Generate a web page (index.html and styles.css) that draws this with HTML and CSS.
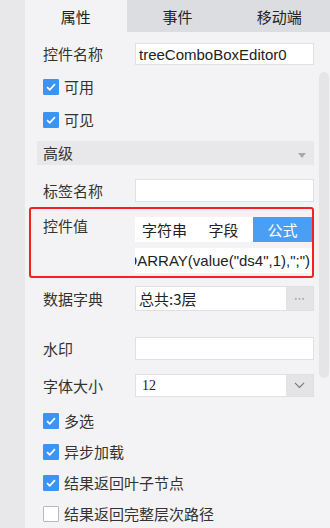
FILE: index.html
```html
<!DOCTYPE html>
<html lang="zh-CN">
<head>
    <meta charset="UTF-8">
    <meta name="viewport" content="width=device-width, initial-scale=1.0">
    <title>控件属性</title>
    <link rel="stylesheet" href="styles.css">
</head>
<body>
    <div class="sidebar"></div>

    <div class="panel">
        <!-- Pestañas -->
        <div class="tabs">
            <div class="tab active">属性</div>
            <div class="tab">事件</div>
            <div class="tab">移动端</div>
        </div>

        <div class="props">
            <div class="row row-name">
                <span class="label">控件名称</span>
                <div class="field field-name">treeComboBoxEditor0</div>
            </div>

            <div class="check check-enabled">
                <span class="box checked"><svg viewBox="0 0 16 16"><path d="M3.5 8.2 L6.6 11.2 L12.5 4.8"/></svg></span>
                可用
            </div>
            <div class="check check-visible">
                <span class="box checked"><svg viewBox="0 0 16 16"><path d="M3.5 8.2 L6.6 11.2 L12.5 4.8"/></svg></span>
                可见
            </div>

            <div class="group">
                <span>高级</span>
                <span class="caret"></span>
            </div>

            <div class="row row-tag">
                <span class="label">标签名称</span>
                <div class="field"></div>
            </div>

            <!-- Valor del control -->
            <div class="value-box">
                <span class="label value-label">控件值</span>
                <div class="value-body">
                    <div class="segments">
                        <div class="seg">字符串</div>
                        <div class="seg">字段</div>
                        <div class="seg active">公式</div>
                    </div>
                    <div class="formula"><span>=TOARRAY(value("ds4",1),";")</span></div>
                </div>
            </div>

            <div class="row row-dict">
                <span class="label">数据字典</span>
                <div class="field field-btn">
                    <span class="field-text">总共:3层</span>
                    <span class="side-btn"><svg viewBox="0 0 12 4"><circle cx="2" cy="2" r="1"/><circle cx="6" cy="2" r="1"/><circle cx="10" cy="2" r="1"/></svg></span>
                </div>
            </div>

            <div class="row row-mark">
                <span class="label">水印</span>
                <div class="field"></div>
            </div>

            <div class="row row-size">
                <span class="label">字体大小</span>
                <div class="field field-btn">
                    <span class="field-text size-text">12</span>
                    <span class="side-btn"><svg viewBox="0 0 12 7"><path d="M1 1 L6 6 L11 1"/></svg></span>
                </div>
            </div>

            <div class="check check-multi">
                <span class="box checked"><svg viewBox="0 0 16 16"><path d="M3.5 8.2 L6.6 11.2 L12.5 4.8"/></svg></span>
                多选
            </div>
            <div class="check check-next">
                <span class="box checked"><svg viewBox="0 0 16 16"><path d="M3.5 8.2 L6.6 11.2 L12.5 4.8"/></svg></span>
                异步加载
            </div>
            <div class="check check-next">
                <span class="box checked"><svg viewBox="0 0 16 16"><path d="M3.5 8.2 L6.6 11.2 L12.5 4.8"/></svg></span>
                结果返回叶子节点
            </div>
            <div class="check check-next">
                <span class="box"></span>
                结果返回完整层次路径
            </div>
        </div>

        <div class="scrollbar"></div>
    </div>
</body>
</html>
```

FILE: styles.css
```css
/* Estilos generales */
body {
    margin: 0;
    height: 528px;
    overflow: hidden;
    display: flex;
    font-family: "Noto Sans CJK SC", "Noto Sans", sans-serif;
    font-size: 15px;
    color: #333;
    background-color: #f3f3f5;
}

.sidebar {
    width: 25px;
    flex-shrink: 0;
    background-color: #e8e8ea;
}

.panel {
    flex: 1;
    min-width: 0;
    position: relative;
    background-color: #f3f3f5;
}

/* Pestañas */
.tabs {
    display: flex;
    height: 32px;
    background-color: #dcdde1;
}

.tab {
    flex: 1;
    display: flex;
    align-items: center;
    justify-content: center;
    line-height: 20px;
    padding-top: 2px;
    color: #222;
}

.tab.active {
    background-color: #f3f3f5;
}

/* Propiedades */
.props {
    padding: 0 16px 0 4px;
}

.row {
    display: flex;
    align-items: center;
    padding-left: 14px;
}

.label {
    width: 92px;
    flex-shrink: 0;
    line-height: 20px;
}

.field {
    flex: 1;
    min-width: 0;
    height: 23px;
    box-sizing: border-box;
    display: flex;
    align-items: center;
    background-color: #fff;
    border: 1px solid #e0e0e2;
    font-family: "Liberation Sans", Arial, sans-serif;
    font-size: 15px;
    color: #222;
    padding-left: 3px;
}

.row-name { margin-top: 11px; }
.field-name { height: 22px; }
.row-tag { margin-top: 14px; }
.row-dict { margin-top: 8px; }
.row-dict .field { height: 25px; }
.row-mark { margin-top: 26px; }
.row-size { margin-top: 14px; }

.field-btn {
    padding-left: 0;
    overflow: hidden;
}

.field-text {
    flex: 1;
    padding-left: 3px;
    font-family: "Noto Sans CJK SC", sans-serif;
    line-height: 20px;
}

.size-text {
    font-family: "Liberation Serif", "DejaVu Serif", serif;
    font-size: 14px;
    padding-left: 6px;
}

.side-btn {
    width: 27px;
    height: 100%;
    display: flex;
    align-items: center;
    justify-content: center;
    background-color: #e4e4e7;
}

.side-btn svg {
    width: 11px;
}

.row-dict .side-btn svg {
    fill: #9a9a9a;
}

.row-size .side-btn svg {
    width: 11px;
    fill: none;
    stroke: #777;
    stroke-width: 1.2;
}

/* Casillas */
.check {
    display: flex;
    align-items: center;
    gap: 5px;
    height: 16px;
    padding-left: 14px;
    line-height: 20px;
}

.box {
    width: 16px;
    height: 16px;
    box-sizing: border-box;
    flex-shrink: 0;
    background-color: #fff;
    border: 1px solid #b9b9bd;
    border-radius: 1px;
}

.box.checked {
    background-color: #3b93f5;
    border-color: #3b93f5;
}

.box svg {
    display: block;
    width: 14px;
    height: 14px;
    fill: none;
    stroke: #fff;
    stroke-width: 2;
}

.check-enabled { margin-top: 14px; }
.check-visible { margin-top: 17px; }
.check-multi { margin-top: 16px; }
.check-next { margin-top: 15px; }

/* Grupo avanzado */
.group {
    margin: 13px 0 0 8px;
    height: 24px;
    display: flex;
    align-items: center;
    justify-content: space-between;
    padding: 0 8px 0 6px;
    background-color: #e8e8ea;
    line-height: 20px;
}

.caret {
    width: 0;
    height: 0;
    border-left: 4px solid transparent;
    border-right: 4px solid transparent;
    border-top: 5px solid #a8a8ab;
    margin-top: 4px;
}

/* Valor del control */
.value-box {
    margin-top: 5px;
    display: flex;
    border: 2px solid #f22222;
    border-radius: 3px;
    padding: 8px 0 3px 12px;
}

.value-label {
    margin-top: -1px;
}

.value-body {
    flex: 1;
    display: flex;
    flex-direction: column;
    gap: 6px;
    min-width: 0;
}

.segments {
    display: flex;
    height: 25px;
    background-color: #fff;
}

.seg {
    flex: 1;
    display: flex;
    align-items: center;
    justify-content: center;
    line-height: 20px;
    color: #222;
}

.seg.active {
    background-color: #4a9ff5;
    color: #fff;
}

.formula {
    height: 25px;
    display: flex;
    align-items: center;
    justify-content: flex-end;
    overflow: hidden;
    white-space: nowrap;
    background-color: #fff;
    font-family: "Liberation Sans", Arial, sans-serif;
    font-size: 15px;
    color: #222;
    padding-right: 2px;
}

.formula span {
    flex-shrink: 0;
}

/* Barra de desplazamiento */
.scrollbar {
    position: absolute;
    left: 294px;
    top: 72px;
    width: 10px;
    height: 306px;
    border-radius: 5px;
    background-color: #e5e5e8;
}
```
